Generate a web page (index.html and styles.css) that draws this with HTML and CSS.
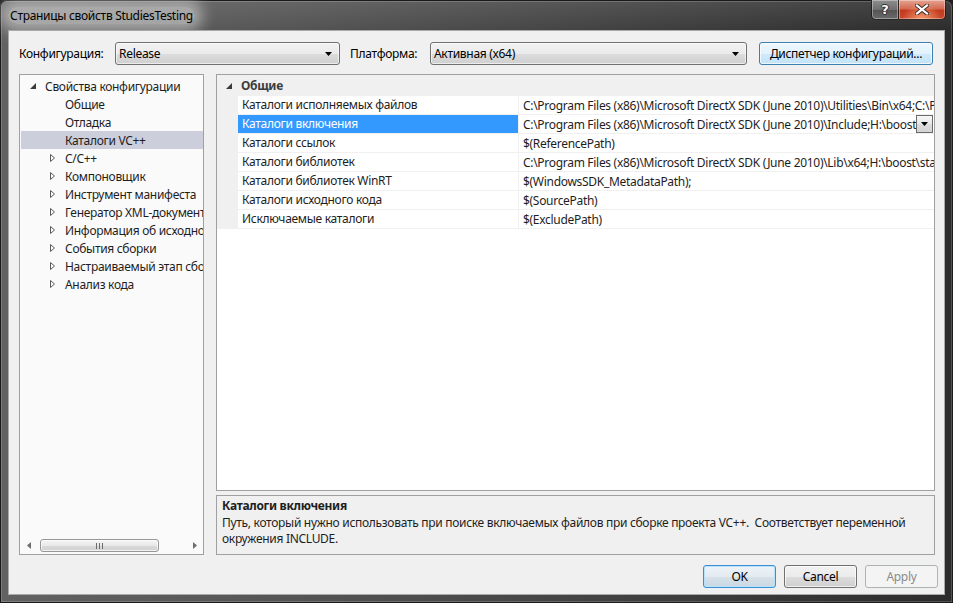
FILE: index.html
```html
<!DOCTYPE html>
<html lang="ru">
<head>
<meta charset="utf-8">
<title>Страницы свойств StudiesTesting</title>
<link rel="stylesheet" href="styles.css">
</head>
<body>
<div class="window">
  <div class="titlebar">
    <div class="title">Страницы свойств StudiesTesting</div>
    <div class="caption">
      <div class="cbtn help"><span>?</span></div>
      <div class="cbtn close">
        <svg width="14" height="11" viewBox="0 0 14 11">
          <path d="M2 1.5 L12 9.5 M12 1.5 L2 9.5" stroke="#3a2a2a" stroke-width="4" stroke-linecap="square"/>
          <path d="M2 1.5 L12 9.5 M12 1.5 L2 9.5" stroke="#ffffff" stroke-width="2.2" stroke-linecap="square"/>
        </svg>
      </div>
    </div>
  </div>
  <div class="client">
    <div class="config-row">
      <span class="lbl lbl-config">Конфигурация:</span>
      <div class="combo combo-config"><span class="combo-text">Release</span>
        <svg class="arrow" width="7" height="4" viewBox="0 0 7 4"><path d="M0 0 H7 L3.5 4 Z" fill="#000"/></svg></div>
      <span class="lbl lbl-platform">Платформа:</span>
      <div class="combo combo-platform"><span class="combo-text">Активная (x64)</span>
        <svg class="arrow" width="7" height="4" viewBox="0 0 7 4"><path d="M0 0 H7 L3.5 4 Z" fill="#000"/></svg></div>
      <div class="btn btn-hot btn-manager">Диспетчер конфигураций...</div>
    </div>

    <div class="main">
      <div class="tree">
        <div class="tree-items">
          <div class="trow root"><span class="exp"><svg width="6" height="6" viewBox="0 0 6 6"><path d="M6 0 V6 H0 Z" fill="#3b3b3b"/></svg></span>Свойства конфигурации</div>
          <div class="trow child"><span class="exp"></span>Общие</div>
          <div class="trow child"><span class="exp"></span>Отладка</div>
          <div class="trow child selected"><span class="exp"></span>Каталоги VC++</div>
          <div class="trow child"><span class="exp"><svg width="5" height="8" viewBox="0 0 5 8"><path d="M0.5 0.5 L4.5 4 L0.5 7.5 Z" fill="none" stroke="#5a5a5a"/></svg></span>C/C++</div>
          <div class="trow child"><span class="exp"><svg width="5" height="8" viewBox="0 0 5 8"><path d="M0.5 0.5 L4.5 4 L0.5 7.5 Z" fill="none" stroke="#5a5a5a"/></svg></span>Компоновщик</div>
          <div class="trow child"><span class="exp"><svg width="5" height="8" viewBox="0 0 5 8"><path d="M0.5 0.5 L4.5 4 L0.5 7.5 Z" fill="none" stroke="#5a5a5a"/></svg></span>Инструмент манифеста</div>
          <div class="trow child"><span class="exp"><svg width="5" height="8" viewBox="0 0 5 8"><path d="M0.5 0.5 L4.5 4 L0.5 7.5 Z" fill="none" stroke="#5a5a5a"/></svg></span>Генератор XML-документов</div>
          <div class="trow child"><span class="exp"><svg width="5" height="8" viewBox="0 0 5 8"><path d="M0.5 0.5 L4.5 4 L0.5 7.5 Z" fill="none" stroke="#5a5a5a"/></svg></span>Информация об исходном коде</div>
          <div class="trow child"><span class="exp"><svg width="5" height="8" viewBox="0 0 5 8"><path d="M0.5 0.5 L4.5 4 L0.5 7.5 Z" fill="none" stroke="#5a5a5a"/></svg></span>События сборки</div>
          <div class="trow child"><span class="exp"><svg width="5" height="8" viewBox="0 0 5 8"><path d="M0.5 0.5 L4.5 4 L0.5 7.5 Z" fill="none" stroke="#5a5a5a"/></svg></span>Настраиваемый этап сборки</div>
          <div class="trow child"><span class="exp"><svg width="5" height="8" viewBox="0 0 5 8"><path d="M0.5 0.5 L4.5 4 L0.5 7.5 Z" fill="none" stroke="#5a5a5a"/></svg></span>Анализ кода</div>
        </div>
        <div class="hscroll">
          <div class="sb-arrow"><svg width="4" height="7" viewBox="0 0 4 7"><path d="M4 0 V7 L0 3.5 Z" fill="#6d6d6d"/></svg></div>
          <div class="sb-track">
            <div class="sb-thumb">
              <svg width="7" height="6" viewBox="0 0 7 6"><path d="M0.5 0 V6 M3.5 0 V6 M6.5 0 V6" stroke="#6a6a6a" stroke-width="1"/></svg>
            </div>
          </div>
          <div class="sb-arrow"><svg width="4" height="7" viewBox="0 0 4 7"><path d="M0 0 V7 L4 3.5 Z" fill="#6d6d6d"/></svg></div>
        </div>
      </div>

      <div class="right">
        <div class="grid">
          <div class="cat-header">
            <span class="cat-exp"><svg width="6" height="6" viewBox="0 0 6 6"><path d="M6 0 V6 H0 Z" fill="#3b3b3b"/></svg></span>
            <span class="cat-title">Общие</span>
          </div>
          <div class="prow">
            <div class="gutter"></div>
            <div class="pname">Каталоги исполняемых файлов</div>
            <div class="pvalue"><span class="vtext">C:\Program Files (x86)\Microsoft DirectX SDK (June 2010)\Utilities\Bin\x64;C:\Program Files (x86)\Windows Kits\8.0\bin\x64;$(ExecutablePath)</span></div>
          </div>
          <div class="prow">
            <div class="gutter"></div>
            <div class="pname selected">Каталоги включения</div>
            <div class="pvalue"><span class="vtext">C:\Program Files (x86)\Microsoft DirectX SDK (June 2010)\Include;H:\boost;$(IncludePath)</span>
              <span class="vdrop"><svg width="7" height="4" viewBox="0 0 7 4"><path d="M0 0 H7 L3.5 4 Z" fill="#000"/></svg></span></div>
          </div>
          <div class="prow">
            <div class="gutter"></div>
            <div class="pname">Каталоги ссылок</div>
            <div class="pvalue"><span class="vtext">$(ReferencePath)</span></div>
          </div>
          <div class="prow">
            <div class="gutter"></div>
            <div class="pname">Каталоги библиотек</div>
            <div class="pvalue"><span class="vtext">C:\Program Files (x86)\Microsoft DirectX SDK (June 2010)\Lib\x64;H:\boost\stage\lib;$(LibraryPath)</span></div>
          </div>
          <div class="prow">
            <div class="gutter"></div>
            <div class="pname">Каталоги библиотек WinRT</div>
            <div class="pvalue"><span class="vtext">$(WindowsSDK_MetadataPath);</span></div>
          </div>
          <div class="prow">
            <div class="gutter"></div>
            <div class="pname">Каталоги исходного кода</div>
            <div class="pvalue"><span class="vtext">$(SourcePath)</span></div>
          </div>
          <div class="prow">
            <div class="gutter"></div>
            <div class="pname">Исключаемые каталоги</div>
            <div class="pvalue"><span class="vtext">$(ExcludePath)</span></div>
          </div>
        </div>
        <div class="desc">
          <div class="desc-title">Каталоги включения</div>
          <div class="desc-line">Путь, который нужно использовать при поиске включаемых файлов при сборке проекта VC++.&nbsp; Соответствует переменной</div>
          <div class="desc-line">окружения INCLUDE.</div>
        </div>
      </div>
    </div>

    <div class="buttons">
      <div class="btn btn-default">OK</div>
      <div class="btn">Cancel</div>
      <div class="btn btn-disabled">Apply</div>
    </div>
  </div>
</div>
</body>
</html>
```

FILE: styles.css
```css
* {
  box-sizing: border-box;
}

html, body {
  margin: 0;
  padding: 0;
  background: #1c1c1c;
}

body {
  font-family: "Noto Sans", "Segoe UI", sans-serif;
  font-size: 12px;
  letter-spacing: -0.3px;
  color: #000;
}

.window {
  width: 953px;
  height: 603px;
  display: flex;
  flex-direction: column;
  padding: 0 8px 8px 8px;
  border-radius: 7px 7px 0 0;
  background:
    linear-gradient(180deg, rgba(255, 255, 255, 0.10) 0px, rgba(255, 255, 255, 0) 30px),
    linear-gradient(90deg, #626262 0%, #555555 30%, #444444 60%, #2c2c2c 100%);
  box-shadow: inset 0 0 0 1px #1a1a1a, inset 0 0 0 2px rgba(255, 255, 255, 0.18);
}

/* ---------- title bar ---------- */
.titlebar {
  height: 30px;
  display: flex;
  justify-content: space-between;
  align-items: flex-start;
}

.title {
  margin-top: 7px;
  height: 17px;
  line-height: 17px;
  padding: 0 2px;
  white-space: nowrap;
  color: #000;
  background: rgba(222, 222, 222, 0.55);
  box-shadow: 0 0 14px 8px rgba(222, 222, 222, 0.55);
  border-radius: 12px;
}

.caption {
  display: flex;
  margin-right: -1px;
}

.cbtn {
  height: 20px;
  display: flex;
  align-items: center;
  justify-content: center;
  border: 1px solid rgba(20, 20, 20, 0.85);
  border-top: none;
  box-shadow: inset 0 0 0 1px rgba(255, 255, 255, 0.35);
}

.help {
  width: 27px;
  border-right: none;
  border-radius: 0 0 0 5px;
  background: linear-gradient(180deg, #8e8e8e 0%, #6f6f6f 50%, #555555 55%, #6a6a6a 100%);
}

.help span {
  font-family: "DejaVu Sans", sans-serif;
  font-weight: bold;
  font-size: 13px;
  line-height: 13px;
  letter-spacing: 0;
  color: #ffffff;
  text-shadow: 0 0 1px #222, 1px 0 0 #333, -1px 0 0 #333, 0 1px 0 #333, 0 -1px 0 #333;
}

.close {
  width: 48px;
  border-radius: 0 0 5px 0;
  background:
    radial-gradient(ellipse at 50% 100%, rgba(255, 170, 120, 0.8) 0%, rgba(255, 120, 80, 0) 60%),
    linear-gradient(180deg, #e5a593 0%, #d46a52 45%, #c23a1f 55%, #c9482c 100%);
}

/* ---------- client ---------- */
.client {
  flex: 1;
  display: flex;
  flex-direction: column;
  background: #f0f0f0;
  border: 1px solid #a9a9a9;
  padding: 11px 6px 0 10px;
}

.config-row {
  display: flex;
  align-items: center;
  height: 23px;
}

.lbl {
  white-space: nowrap;
}

.lbl-config {
  width: 96px;
}

.lbl-platform {
  width: 80px;
  margin-left: 10px;
}

.combo {
  height: 23px;
  display: flex;
  align-items: center;
  justify-content: space-between;
  padding: 0 7px 0 3px;
  border: 1px solid #707070;
  border-radius: 3px;
  background: linear-gradient(180deg, #f2f2f2 0%, #ebebeb 50%, #dddddd 51%, #cfcfcf 100%);
  box-shadow: inset 0 0 0 1px rgba(255, 255, 255, 0.6);
}

.combo-text {
  white-space: nowrap;
}

.combo-config {
  width: 225px;
}

.combo-platform {
  width: 317px;
}

.btn {
  width: 73px;
  height: 23px;
  display: flex;
  align-items: center;
  justify-content: center;
  white-space: nowrap;
  border: 1px solid #707070;
  border-radius: 3px;
  background: linear-gradient(180deg, #f2f2f2 0%, #ebebeb 50%, #dddddd 51%, #cfcfcf 100%);
  box-shadow: inset 0 0 0 1px rgba(255, 255, 255, 0.7);
}

.btn-hot {
  border-color: #3c7fb1;
  background: linear-gradient(180deg, #eef7fd 0%, #e2f2fc 50%, #d0eafb 51%, #c3e3f8 100%);
}

.btn-manager {
  width: 174px;
  margin-left: 12px;
}

.btn-default {
  border-color: #3c8fd0;
  background: linear-gradient(180deg, #eef3f7 0%, #e3ebf1 50%, #d6e1e9 51%, #cbd8e2 100%);
  box-shadow: inset 0 0 0 1px #b6e2fb;
}

.btn-disabled {
  border-color: #adb2b5;
  background: #f4f4f4;
  color: #8b8b8b;
  box-shadow: none;
}

/* ---------- main ---------- */
.main {
  display: flex;
  margin-top: 9px;
  height: 481px;
}

.tree {
  width: 185px;
  border: 1px solid #a0a0a0;
  background: #fafafa;
  display: flex;
  flex-direction: column;
}

.tree-items {
  flex: 1;
  padding-top: 2px;
  overflow: hidden;
}

.trow {
  height: 18px;
  display: flex;
  align-items: center;
  white-space: nowrap;
  margin-left: 1px;
  color: #1e1e1e;
}

.trow.root {
  padding-left: 9px;
}

.trow.child {
  padding-left: 29px;
}

.trow.selected {
  background: #cccedb;
}

.exp {
  width: 15px;
  flex: none;
  display: flex;
  align-items: center;
}

.exp svg {
  display: block;
}

.hscroll {
  height: 17px;
  display: flex;
  align-items: center;
  flex: none;
}

.sb-arrow {
  width: 17px;
  height: 17px;
  display: flex;
  align-items: center;
  justify-content: center;
  flex: none;
}

.sb-track {
  flex: 1;
  height: 17px;
  display: flex;
  align-items: center;
}

.sb-thumb {
  width: 119px;
  height: 13px;
  margin-left: 3px;
  border: 1px solid #979797;
  border-radius: 3px;
  background: linear-gradient(180deg, #f5f5f5 0%, #e8e8e8 50%, #dadada 51%, #d2d2d2 100%);
  box-shadow: inset 0 0 0 1px rgba(255, 255, 255, 0.7);
  display: flex;
  align-items: center;
  justify-content: center;
}

.right {
  margin-left: 12px;
  width: 719px;
  display: flex;
  flex-direction: column;
}

.grid {
  height: 417px;
  border: 1px solid #a0a0a0;
  background: #ffffff;
  overflow: hidden;
}

.cat-header {
  height: 21px;
  display: flex;
  align-items: center;
  background: #f0f0f0;
  padding-left: 9px;
}

.cat-exp {
  width: 15px;
  display: flex;
  align-items: center;
}

.cat-title {
  font-weight: bold;
  color: #3c3c3c;
}

.prow {
  height: 19px;
  display: flex;
  background: #f0f0f0;
}

.gutter {
  width: 21px;
  flex: none;
}

.pname {
  width: 280px;
  flex: none;
  height: 18px;
  line-height: 18px;
  padding-left: 4px;
  margin-right: 1px;
  background: #ffffff;
  color: #1e1e1e;
  white-space: nowrap;
  overflow: hidden;
}

.pname.selected {
  background: #3399ff;
  color: #ffffff;
}

.pvalue {
  flex: 1;
  min-width: 0;
  height: 18px;
  display: flex;
  align-items: center;
  padding-left: 4px;
  background: #ffffff;
  color: #1e1e1e;
}

.vtext {
  flex: 1;
  min-width: 0;
  white-space: nowrap;
  overflow: hidden;
}

.vdrop {
  width: 17px;
  height: 18px;
  flex: none;
  margin-right: 1px;
  display: flex;
  align-items: center;
  justify-content: center;
  border: 1px solid #6a6a6a;
  background: linear-gradient(180deg, #f7f7f7 0%, #e8e8e8 50%, #dcdcdc 51%, #d4d4d4 100%);
}

.desc {
  flex: 1;
  margin-top: 4px;
  border: 1px solid #a0a0a0;
  padding: 2px 5px 0 5px;
  line-height: 16px;
  color: #1e1e1e;
}

.desc-title {
  font-weight: bold;
  margin-bottom: 1px;
}

.desc-line {
  white-space: nowrap;
}

.buttons {
  display: flex;
  justify-content: flex-end;
  gap: 8px;
  margin-top: 10px;
}
```
